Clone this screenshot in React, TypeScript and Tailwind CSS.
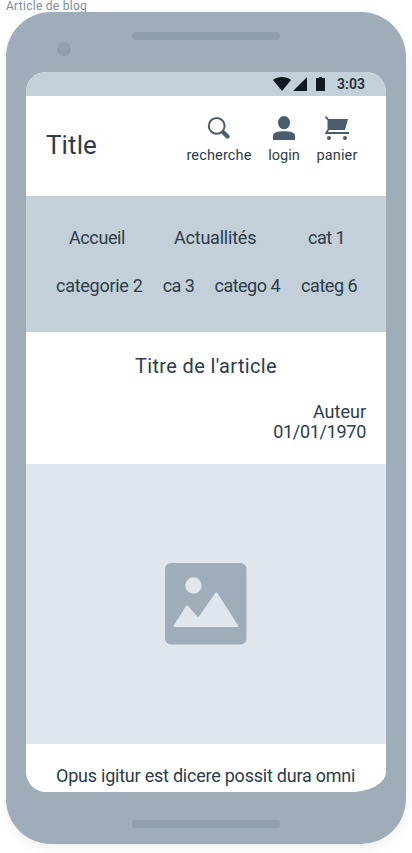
import React from 'react';

function SearchIcon() {
  return (
    <svg className="block h-6 w-6" viewBox="0 0 24 24" fill="none" stroke="#4b5d6b">
      <circle cx="9.7" cy="9.9" r="7.9" strokeWidth="2" />
      <path d="M15 15l2 2" strokeWidth="2.5" />
      <path d="M17 17l3.5 3.5" strokeWidth="4.4" strokeLinecap="round" />
    </svg>
  );
}

function UserIcon() {
  return (
    <svg className="block h-6 w-6" viewBox="0 0 24 24" fill="#4b5d6b">
      <ellipse cx="12" cy="6.6" rx="6.1" ry="6.6" />
      <path d="M1 24v-4.2C1 16.5 5.5 15.2 12 15.2S23 16.5 23 19.8V24z" />
    </svg>
  );
}

function CartIcon() {
  return (
    <svg className="block h-6 w-6 overflow-visible" viewBox="0 0 24 24" fill="#4b5d6b">
      <path d="M3 3h20l-3 11H3z" />
      <path d="M.4.6L3.4 3.8V13.6L1.2 17H24" fill="none" stroke="#4b5d6b" strokeWidth="1.8" />
      <circle cx="4" cy="22" r="2" />
      <circle cx="20" cy="22" r="2" />
    </svg>
  );
}

function Action({ label, className, children }: { label: string; className: string; children: React.ReactNode }) {
  return (
    <div className={`flex flex-col items-center ${className}`}>
      {children}
      <span className="mt-1.5 whitespace-nowrap text-[14.5px] leading-5">{label}</span>
    </div>
  );
}

function StatusBar() {
  return (
    <div className="flex h-6 shrink-0 items-center justify-end bg-[#c3cfd9] pr-[21px] text-[#10191f]">
      <svg className="mr-3 block h-4 w-[52px]" viewBox="0 0 52 16" fill="currentColor">
        <path d="M0 3.9C5 .1 13 .1 18 3.9L9 15z" />
        <path d="M20 15L34 1v14zM43 2h3V1h3v1h3v13h-9z" />
      </svg>
      <span className="w-7 whitespace-nowrap text-[14px] font-semibold leading-6 tracking-[0.1px] text-[#23303b]">3:03</span>
    </div>
  );
}

export default function App() {
  return (
    <main className="flex h-[853px] w-[412px] flex-col overflow-hidden bg-white pl-1.5 font-['Roboto','Liberation_Sans',sans-serif] text-[#2c3c4a]">
      <div className="h-3 shrink-0 whitespace-nowrap text-[12px] leading-3 tracking-[0.28px] text-[#7e909f]">Article de blog</div>
      <div className="flex h-[832px] w-[400px] shrink-0 flex-col rounded-[45px] bg-[#9eadb9] px-5 shadow-[0_4px_12px_rgba(0,0,0,0.07)]">
        <div className="flex h-[60px] shrink-0 pl-[31px] pt-5">
          <div className="mt-[10px] h-[14px] w-[14px] rounded-full bg-[#8f9fae]" />
          <div className="ml-[61px] h-2 w-[148px] rounded-full bg-[#8f9fae]" />
        </div>
        <div className="flex h-[720px] w-[360px] shrink-0 flex-col overflow-hidden rounded-[20px] rounded-br-[36px_20px] bg-white">
          <StatusBar />
          <header className="flex h-[100px] shrink-0 justify-between pl-5 pr-7">
            <h1 className="mt-[33px] text-[26px] leading-8 tracking-[0.1px]">Title</h1>
            <div className="flex gap-4 pt-5">
              <Action label="recherche" className="w-[66px] tracking-[0.15px]"><SearchIcon /></Action>
              <Action label="login" className="w-8"><UserIcon /></Action>
              <Action label="panier" className="w-[42px] tracking-[0.15px]"><CartIcon /></Action>
            </div>
          </header>
          <nav className="flex h-[136px] shrink-0 flex-col gap-6 bg-[#c3cfd9] px-[30px] pt-[30px] text-[18px] leading-6">
            <div className="flex pl-[13px]">
              <span className="w-[57px] whitespace-nowrap tracking-[-0.4px]">Accueil</span>
              <span className="ml-12 w-[84px] whitespace-nowrap tracking-[-0.22px]">Actuallités</span>
              <span className="ml-[50px] w-[38px] whitespace-nowrap tracking-[-0.5px]">cat 1</span>
            </div>
            <div className="flex">
              <span className="w-[87px] whitespace-nowrap tracking-[-0.27px]">categorie 2</span>
              <span className="ml-5 w-8 whitespace-nowrap tracking-[-0.5px]">ca 3</span>
              <span className="ml-5 w-[66px] whitespace-nowrap tracking-[-0.5px]">catego 4</span>
              <span className="ml-[21px] w-14 whitespace-nowrap tracking-[-0.45px]">categ 6</span>
            </div>
          </nav>
          <section className="flex h-[132px] shrink-0 flex-col px-5 pt-[21px]">
            <h2 className="text-center text-[20px] leading-[26px] tracking-[0.35px]">Titre de l'article</h2>
            <div className="mt-[23px] text-right text-[18px] leading-5">
              <p>Auteur</p>
              <p className="tracking-[-0.3px]">01/01/1970</p>
            </div>
          </section>
          <div className="flex h-[280px] shrink-0 items-center justify-center bg-[#dfe6ed]">
            <svg className="mr-px block h-[82px] w-[82px]" viewBox="0 0 82 82">
              <rect width="81.5" height="81.5" rx="6" fill="#9eadb9" />
              <circle cx="28.5" cy="22.5" r="8.2" fill="#dfe6ed" />
              <path d="M9.5 63L22 43.5L33.3 56L51.3 30.3L72.3 63z" fill="#dfe6ed" stroke="#dfe6ed" strokeWidth="2" strokeLinejoin="round" />
            </svg>
          </div>
          <p className="whitespace-nowrap pl-[30px] pt-5 text-[18px] leading-6 tracking-[-0.23px]">Opus igitur est dicere possit dura omni</p>
        </div>
        <div className="mx-auto mt-7 h-2 w-[148px] shrink-0 rounded-full bg-[#8f9fae]" />
      </div>
    </main>
  );
}
